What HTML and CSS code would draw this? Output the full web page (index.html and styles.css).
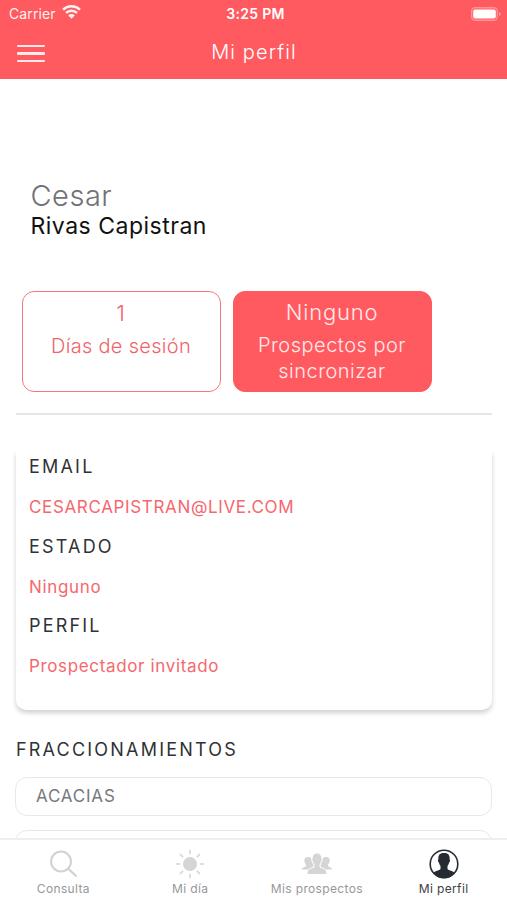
FILE: index.html
```
<!DOCTYPE html>
<html lang="es">
<head>
    <meta charset="UTF-8">
    <meta name="viewport" content="width=device-width, initial-scale=1.0">
    <title>Mi perfil</title>
    <link rel="stylesheet" href="styles.css">
</head>
<body>
    <header class="header">
        <div class="status-bar">
            <div class="status-left">
                <span class="carrier">Carrier</span>
                <svg class="wifi" width="19" height="14" viewBox="0 0 19 14">
                    <path d="M1 4.700a12.200 12.200 0 0 1 17 0M4 7.900a7.800 7.800 0 0 1 11 0" fill="none" stroke="#fff" stroke-width="2.500"/>
                    <path d="M9.500 13.700L6.200 10.400a4.700 4.700 0 0 1 6.600 0z" fill="#fff"/>
                </svg>
            </div>
            <span class="time">3:25 PM</span>
            <div class="status-right">
                <svg width="31" height="14" viewBox="0 0 31 14">
                    <rect x=".7" y=".7" width="25.600" height="12.600" rx="3.500" fill="none" stroke="#fff" stroke-opacity=".35" stroke-width="1.400"/>
                    <rect x="2.200" y="2.400" width="22.600" height="9.200" rx="2" fill="#fff"/>
                    <path d="M28 5v4q1.800-.6 1.800-2T28 5z" fill="#fff" fill-opacity=".4"/>
                </svg>
            </div>
        </div>
        <div class="navbar">
            <button class="menu-button" aria-label="Menú">
                <span></span>
                <span></span>
                <span></span>
            </button>
            <h1 class="title">Mi perfil</h1>
        </div>
    </header>

    <main class="content">
        <div class="name">
            <div class="first-name">Cesar</div>
            <div class="last-name">Rivas Capistran</div>
        </div>

        <div class="stats">
            <div class="stat stat-outline">
                <div class="stat-value">1</div>
                <div class="stat-label">Días de sesión</div>
            </div>
            <div class="stat stat-filled">
                <div class="stat-value">Ninguno</div>
                <div class="stat-label">Prospectos por sincronizar</div>
            </div>
        </div>

        <div class="card-wrap">
            <dl class="card">
                <dt>EMAIL</dt>
                <dd>CESARCAPISTRAN@LIVE.COM</dd>
                <dt>ESTADO</dt>
                <dd>Ninguno</dd>
                <dt>PERFIL</dt>
                <dd>Prospectador invitado</dd>
            </dl>
        </div>

        <h2 class="section-title">FRACCIONAMIENTOS</h2>
        <div class="list">
            <div class="list-item">ACACIAS</div>
            <div class="list-item"></div>
        </div>
    </main>

    <nav class="tabs">
        <div class="tab">
            <svg width="32" height="32" viewBox="0 0 32 32" fill="none" stroke="#d0d2d3" stroke-width="2">
                <circle cx="14" cy="13.500" r="10"/>
                <path d="M21 20.500l8.500 8" stroke-width="2.400"/>
            </svg>
            <span>Consulta</span>
        </div>
        <div class="tab">
            <svg width="32" height="32" viewBox="0 0 32 32">
                <circle cx="16" cy="16" r="7" fill="#d3d5d6"/>
                <path d="M16 1.800v4.500M16 25.700v4.500M1.800 16h4.500M25.700 16h4.500M6 6l3.100 3.100M22.900 22.900l3.100 3.100M6 26l3.100-3.100M22.900 9.100L26 6" stroke="#d3d5d6" stroke-width="1.600"/>
            </svg>
            <span>Mi día</span>
        </div>
        <div class="tab">
            <svg width="32" height="32" viewBox="0 0 32 32" fill="#d3d5d6">
                <path d="M16 5.500c3 0 4.500 2 4.300 5 .8.500.5 2.200-.3 2.800-.3 1.600-.9 2.500-1.500 3.200v2.300c1 1.500 3.600 1.600 5.200 2.700 1.200.8 1.800 2.300 1.900 4.500H6.400c.1-2.200.7-3.700 1.900-4.500 1.600-1.100 4.200-1.200 5.200-2.700v-2.300c-.6-.7-1.200-1.600-1.500-3.200-.8-.6-1.100-2.300-.3-2.800-.2-3 1.300-5 4.300-5z"/>
                <path id="side" d="M7.200 9c1.400 0 2.500.6 3.100 1.600-.2 1.500 0 2.700 1 3.700.3 1.200.8 2.200 1.200 2.900v1c-1 1.300-3.500 1.300-5.100 3.300H1c0-2.300 2.400-2.200 4-3.600v-1.300c-.9-.8-1.100-1.600-1.300-2.700-.6-.4-.8-1.500-.3-2C3.400 10.200 4.800 9 7.200 9z"/>
                <use href="#side" transform="matrix(-1 0 0 1 32 0)"/>
            </svg>
            <span>Mis prospectos</span>
        </div>
        <div class="tab active">
            <svg width="32" height="32" viewBox="0 0 32 32">
                <circle cx="16" cy="16" r="13.800" fill="none" stroke="#252b31" stroke-width="1.600"/>
                <path d="M16 5c4.200 0 6 2.300 5.600 6.300.8.500.5 2.800-.5 3.200-.3 1.600-.9 2.600-1.600 3.400v3.200c1.200 1.700 4.900 1.500 7.300 4a13.800 13.800 0 0 1-21.600 0c2.400-2.500 6.100-2.300 7.300-4v-3.200c-.7-.8-1.300-1.800-1.600-3.400-1-.4-1.300-2.700-.5-3.200C10 7.300 11.800 5 16 5z" fill="#252b31"/>
            </svg>
            <span>Mi perfil</span>
        </div>
    </nav>
</body>
</html>
```
FILE: styles.css
```
* {
    box-sizing: border-box;
}
body {
    display: flex;
    flex-direction: column;
    height: 100vh;
    margin: 0;
    overflow: hidden;
    background-color: #fff;
    font-family: Inter, "Liberation Sans", sans-serif;
    color: #2f3236;
}
.header {
    flex: none;
    height: 79px;
    background-color: #ff5a60;
    color: #fff;
}
.status-bar {
    display: grid;
    grid-template-columns: 1fr auto 1fr;
    align-items: center;
    height: 27px;
    padding: 0 5px 0 9px;
    font-size: 14px;
}
.status-left {
    display: flex;
    align-items: center;
    gap: 6px;
    opacity: 0.92;
}
.carrier {
    letter-spacing: 0.100px;
}
.wifi {
    margin-top: -3px;
}
.time {
    font-size: 14px;
    font-weight: 600;
    letter-spacing: 0.300px;
}
.status-right {
    display: flex;
    justify-content: flex-end;
}
.navbar {
    display: grid;
    grid-template-columns: 1fr auto 1fr;
    align-items: center;
    height: 49px;
    padding: 0 16px;
}
.menu-button {
    display: flex;
    flex-direction: column;
    gap: 5px;
    width: 29px;
    padding: 4px 0 0 1px;
    border: none;
    background: none;
}
.menu-button span {
    height: 2.500px;
    border-radius: 1px;
    background-color: #ffe9ea;
}
.title {
    margin: 0;
    padding-left: 1px;
    font-size: 20px;
    font-weight: 300;
    line-height: 24px;
    letter-spacing: 1.100px;
}
.content {
    flex: 1;
    min-height: 0;
    padding: 100px 15px 0 16px;
    overflow: hidden;
}
.name {
    padding-left: 14.500px;
}
.first-name {
    height: 32px;
    font-size: 29px;
    font-weight: 300;
    line-height: 33px;
    letter-spacing: 0.500px;
    color: #707276;
}
.last-name {
    height: 32px;
    font-size: 23px;
    line-height: 31px;
    letter-spacing: 0.500px;
    color: #111;
}
.stats {
    display: flex;
    gap: 12px;
    margin-top: 48px;
    padding: 0 0 21px 5.500px;
    border-bottom: 2px solid #e4e5e6;
}
.stat {
    width: 199px;
    height: 101px;
    padding: 8px 14px 0;
    border: 1.500px solid #f5777d;
    border-radius: 12px;
    text-align: center;
    font-weight: 300;
}
.stat-outline {
    padding-top: 9px;
    color: #f0646b;
}
.stat-filled {
    border-color: #ff5a60;
    background-color: #ff5a60;
    color: #ffe9ea;
}
.stat-value {
    margin-bottom: 7px;
    font-size: 22px;
    line-height: 25px;
    letter-spacing: 0.800px;
}
.stat-label {
    font-size: 20px;
    line-height: 26px;
    letter-spacing: 0.300px;
}
.stat-filled .stat-label {
    letter-spacing: 0.500px;
}
/* hides the card's shadow above its top edge */
.card-wrap {
    margin: 36px -15px 0 -16px;
    padding: 0 15px 12px 16px;
    overflow: hidden;
}
.card {
    height: 259px;
    margin: 0;
    padding: 1px 13px 0;
    border-radius: 0 0 10px 10px;
    box-shadow: 0 3px 5px rgba(0, 0, 0, 0.19);
}
.card dt {
    height: 39px;
    font-size: 18px;
    line-height: 30px;
    letter-spacing: 2.200px;
}
.card dd {
    height: 40.500px;
    margin: 0;
    font-size: 17px;
    line-height: 33px;
    letter-spacing: 0.650px;
    color: #f5686e;
}
.section-title {
    margin: 13px 0 0;
    font-size: 18px;
    font-weight: 400;
    line-height: 30px;
    letter-spacing: 2.200px;
}
.list {
    display: flex;
    flex-direction: column;
    gap: 14px;
    margin-top: 12px;
    margin-left: -1px;
}
.list-item {
    flex: none;
    height: 39px;
    padding-left: 20px;
    border: 1px solid #e7e8e9;
    border-radius: 12px;
    font-size: 17px;
    line-height: 37px;
    letter-spacing: 0.800px;
    color: #77797c;
}
.tabs {
    display: flex;
    flex: none;
    height: 62px;
    border-top: 2px solid #eceef0;
    background-color: #fff;
}
.tab {
    display: flex;
    flex: 1;
    flex-direction: column;
    align-items: center;
    padding-top: 8px;
    font-size: 12px;
    line-height: 17px;
    letter-spacing: 0.350px;
    color: #96989a;
}
.tab.active {
    color: #3c4045;
}
```
